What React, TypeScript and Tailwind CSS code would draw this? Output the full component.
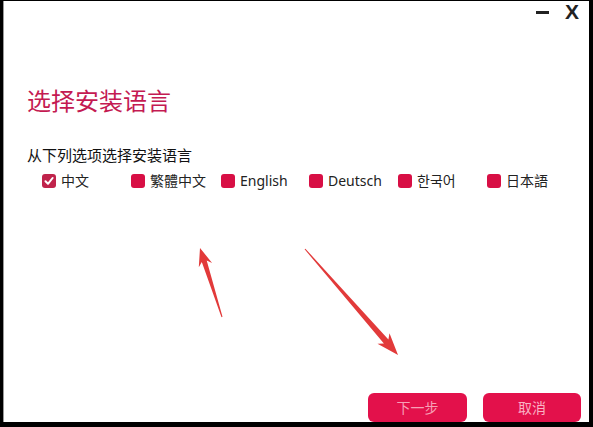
import React from "react";

const LANGS = [
  { label: "中文", checked: true },
  { label: "繁體中文", checked: false },
  { label: "English", checked: false },
  { label: "Deutsch", checked: false },
  { label: "한국어", checked: false },
  { label: "日本語", checked: false },
];

// tapered annotation arrow: tail -> tip
function arrowPoints(tx: number, ty: number, px: number, py: number, headLen: number, headW: number, shaftW: number) {
  const dx = px - tx;
  const dy = py - ty;
  const len = Math.hypot(dx, dy);
  const ux = dx / len;
  const uy = dy / len;
  const nx = -uy;
  const ny = ux;
  const bx = px - ux * headLen;
  const by = py - uy * headLen;
  const wx = bx - ux * 4;
  const wy = by - uy * 4;
  const pts = [
    [tx + nx * 0.5, ty + ny * 0.5],
    [bx + nx * shaftW, by + ny * shaftW],
    [wx + nx * headW, wy + ny * headW],
    [px, py],
    [wx - nx * headW, wy - ny * headW],
    [bx - nx * shaftW, by - ny * shaftW],
    [tx - nx * 0.5, ty - ny * 0.5],
  ];
  return pts.map((p) => p.map((v) => v.toFixed(1)).join(",")).join(" ");
}

function Checkbox({ checked }: { checked: boolean }) {
  return (
    <span
      className={`flex h-[14px] w-[14px] shrink-0 items-center justify-center rounded-[3px] ${
        checked ? "bg-[#c0234b]" : "bg-[#d80f45]"
      }`}
    >
      {checked && (
        <svg width="10" height="10" viewBox="0 0 10 10" fill="none">
          <polyline points="1.5,5.2 4,7.8 8.6,2" stroke="white" strokeWidth="2" strokeLinecap="round" strokeLinejoin="round" />
        </svg>
      )}
    </span>
  );
}

export default function App() {
  return (
    <div className="relative h-[427px] w-[593px] overflow-hidden border-t border-l-[3px] border-r-4 border-b-[5px] border-black bg-white">
      <div
        className="flex h-full flex-col border-l border-[#9a9a9a] pl-[23px] pr-[8px]"
        style={{ fontFamily: '"Noto Sans", "Noto Sans CJK SC", sans-serif' }}
      >
        {/* window controls */}
        <div className="flex h-[24px] items-start justify-end gap-[16px] pr-[2px]">
          <span className="mt-[10px] h-[3px] w-[13px] bg-[#222]" />
          <span
            className="mt-[-1px] text-[21px] font-bold leading-[24px] text-[#222]"
            style={{ fontFamily: '"Liberation Sans", Arial, sans-serif' }}
          >
            X
          </span>
        </div>

        <h1
          className="mt-[59px] text-[24px] leading-[32px] text-[#c41a52]"
          style={{ fontFamily: '"Noto Sans CJK SC", sans-serif' }}
        >
          选择安装语言
        </h1>

        <p
          className="mt-[29px] text-[15px] leading-[20px] text-[#111]"
          style={{ fontFamily: '"Noto Sans CJK SC", sans-serif' }}
        >
          从下列选项选择安装语言
        </p>

        <div className="ml-[15px] mt-[6px] grid grid-cols-[89px_90px_88px_89px_89px_auto]">
          {LANGS.map((l) => (
            <label key={l.label} className="flex h-[20px] items-center gap-[5px]">
              <Checkbox checked={l.checked} />
              <span
                className="text-[14px] leading-[20px] text-[#222]"
                style={{ fontFamily: '"Noto Sans", "Noto Sans CJK SC", "Noto Sans CJK KR", sans-serif' }}
              >
                {l.label}
              </span>
            </label>
          ))}
        </div>

        <div className="mt-auto flex justify-end gap-[16px]">
          <button
            className="h-[29px] w-[99px] rounded-[6px] bg-[#e3114b] text-[14px] text-[#f7a0b6]"
            style={{ fontFamily: '"Noto Sans CJK SC", sans-serif' }}
          >
            下一步
          </button>
          <button
            className="h-[29px] w-[98px] rounded-[6px] bg-[#e3114b] text-[14px] text-[#f9b2c4]"
            style={{ fontFamily: '"Noto Sans CJK SC", sans-serif' }}
          >
            取消
          </button>
        </div>
      </div>

      {/* annotation arrows */}
      <svg className="pointer-events-none absolute left-[-3px] top-[-1px]" width="593" height="427">
        <polygon points={arrowPoints(222, 317, 200, 248, 14, 7, 2.6)} fill="#e23a3a" />
        <polygon points={arrowPoints(305, 249, 398, 355, 18, 8, 3)} fill="#e23a3a" />
      </svg>
    </div>
  );
}
